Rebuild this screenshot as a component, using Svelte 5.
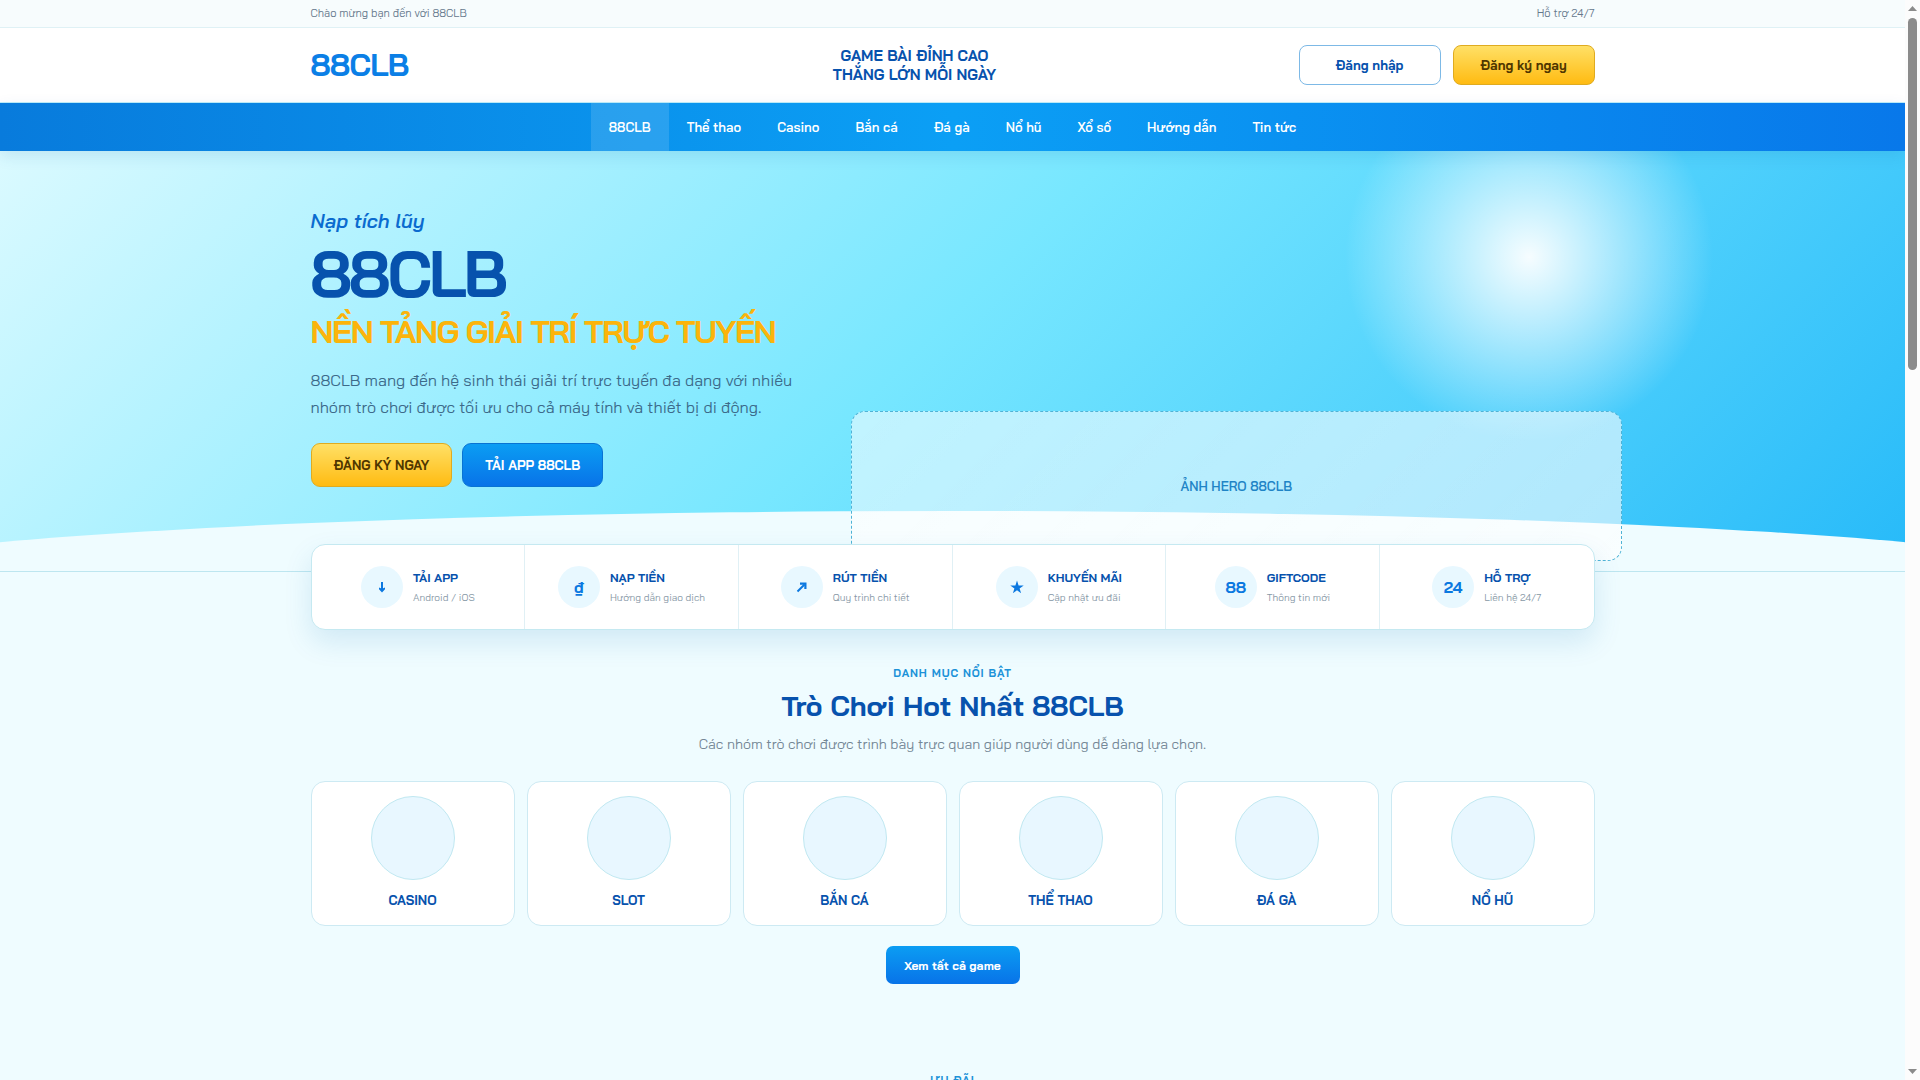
<script>
  const navItems = ['88CLB', 'Thể thao', 'Casino', 'Bắn cá', 'Đá gà', 'Nổ hũ', 'Xổ số', 'Hướng dẫn', 'Tin tức'];

  const quickLinks = [
    { icon: 'down', title: 'TẢI APP', text: 'Android / iOS' },
    { icon: '₫', title: 'NẠP TIỀN', text: 'Hướng dẫn giao dịch' },
    { icon: 'up', title: 'RÚT TIỀN', text: 'Quy trình chi tiết' },
    { icon: 'star', title: 'KHUYẾN MÃI', text: 'Cập nhật ưu đãi' },
    { icon: '88', title: 'GIFTCODE', text: 'Thông tin mới' },
    { icon: '24', title: 'HỖ TRỢ', text: 'Liên hệ 24/7' }
  ];

  const games = ['CASINO', 'SLOT', 'BẮN CÁ', 'THỂ THAO', 'ĐÁ GÀ', 'NỔ HŨ'];

  let active = '88CLB';
</script>

<div class="window">
  <div class="page">
    <div class="topbar">
      <div class="container topbar-inner">
        <span>Chào mừng bạn đến với 88CLB</span>
        <span>Hỗ trợ 24/7</span>
      </div>
    </div>

    <header class="header">
      <div class="container header-inner">
        <a class="logo" href="#home">88CLB</a>
        <p class="slogan">GAME BÀI ĐỈNH CAO<br />THẮNG LỚN MỖI NGÀY</p>
        <div class="actions">
          <a class="btn btn-outline" href="#login">Đăng nhập</a>
          <a class="btn btn-gold" href="#register">Đăng ký ngay</a>
        </div>
      </div>
    </header>

    <nav class="nav">
      {#each navItems as item}
        <a href="#{item}" class:active={active === item} on:click={() => (active = item)}>{item}</a>
      {/each}
    </nav>

    <main>
      <section class="hero">
        <div class="hero-bg">
          <div class="glow"></div>
          <div class="curve"></div>
        </div>
        <div class="container hero-inner">
          <div class="hero-copy">
            <p class="kicker">Nạp tích lũy</p>
            <h1>88CLB</h1>
            <p class="headline">NỀN TẢNG GIẢI TRÍ TRỰC TUYẾN</p>
            <p class="lead">
              88CLB mang đến hệ sinh thái giải trí trực tuyến đa dạng với nhiều
              nhóm trò chơi được tối ưu cho cả máy tính và thiết bị di động.
            </p>
            <div class="hero-actions">
              <a class="btn btn-lg btn-gold" href="#register">ĐĂNG KÝ NGAY</a>
              <a class="btn btn-lg btn-blue" href="#app">TẢI APP 88CLB</a>
            </div>
          </div>
          <div class="hero-image">ẢNH HERO 88CLB</div>
        </div>
      </section>

      <div class="container quick">
        {#each quickLinks as link}
          <a class="quick-item" href="#{link.title}">
            <span class="quick-icon">
              {#if link.icon === 'down'}
                <svg viewBox="0 0 16 16" width="16" height="16"><path d="M8 3v8" stroke="currentColor" stroke-width="2" /><path d="M5 8.5l3 1.2 3-1.2v1.8L8 13.5l-3-3.2z" fill="currentColor" /></svg>
              {:else if link.icon === 'up'}
                <svg viewBox="0 0 16 16" width="16" height="16"><path d="M3.5 12.5l7-7" stroke="currentColor" stroke-width="2" /><path d="M6 3.5h6.5V10h-2.2V5.7H6z" fill="currentColor" /></svg>
              {:else if link.icon === 'star'}
                <svg viewBox="0 0 16 16" width="16" height="16"><path d="M8 1.5l1.6 4.9h5.1l-4.1 3 1.5 4.9L8 11.3l-4.1 3 1.5-4.9-4.1-3h5.1z" fill="currentColor" /></svg>
              {:else}
                {link.icon}
              {/if}
            </span>
            <span class="quick-text">
              <strong>{link.title}</strong>
              <small>{link.text}</small>
            </span>
          </a>
        {/each}
      </div>

      <section class="container section">
        <p class="eyebrow">DANH MỤC NỔI BẬT</p>
        <h2>Trò Chơi Hot Nhất 88CLB</h2>
        <p class="section-text">Các nhóm trò chơi được trình bày trực quan giúp người dùng dễ dàng lựa chọn.</p>
        <div class="games">
          {#each games as game}
            <a class="game" href="#{game}">
              <span class="game-image"></span>
              <strong>{game}</strong>
            </a>
          {/each}
        </div>
        <a class="btn btn-more btn-blue" href="#games">Xem tất cả game</a>
      </section>

      <section class="container section">
        <p class="eyebrow">ƯU ĐÃI</p>
      </section>
    </main>
  </div>

  <div class="scrollbar" aria-hidden="true">
    <svg viewBox="0 0 15 18" width="15" height="18"><path d="M7.5 6l4.5 5H3z" fill="#8b8b8b" /></svg>
    <div class="track"><div class="thumb"></div></div>
    <svg viewBox="0 0 15 18" width="15" height="18"><path d="M7.5 12L3 7h9z" fill="#8b8b8b" /></svg>
  </div>
</div>

<style>
  :global(body) {
    margin: 0;
    font-family: 'Bai Jamjuree', Inter, 'Noto Sans', sans-serif;
    color: #0752ad;
    background: #effcff;
  }

  .window {
    display: grid;
    grid-template-columns: minmax(0, 1fr) 15px;
    height: 100vh;
    overflow: hidden;
  }

  .page {
    min-height: 0;
    overflow: hidden;
    background: #effcff;
  }

  .container {
    width: min(1284px, calc(100% - 32px));
    margin: 0 auto;
    box-sizing: border-box;
  }

  a {
    color: inherit;
    text-decoration: none;
  }

  p,
  h1,
  h2 {
    margin: 0;
  }

  /* Top bar */
  .topbar {
    background: #f7fcfd;
    border-bottom: 1px solid #dff1f5;
    color: #65788c;
    font-size: 11px;
    line-height: 27px;
  }

  .topbar-inner {
    display: flex;
    justify-content: space-between;
  }

  /* Header */
  .header {
    background: #fff;
    border-bottom: 1px solid #bfeefa;
  }

  .header-inner {
    display: grid;
    grid-template-columns: 220px 1fr auto;
    gap: 24px;
    align-items: center;
    height: 74px;
  }

  .logo {
    font-size: 31px;
    font-weight: 700;
    letter-spacing: -0.02em;
    line-height: 38px;
    color: #0b7fe6;
  }

  .slogan {
    text-align: center;
    font-size: 15px;
    font-weight: 700;
    line-height: 19px;
  }

  .actions {
    display: flex;
    gap: 12px;
  }

  .btn {
    display: inline-flex;
    align-items: center;
    justify-content: center;
    box-sizing: border-box;
    width: 142px;
    height: 40px;
    border: 1px solid transparent;
    border-radius: 8px;
    font-size: 13px;
    font-weight: 700;
    white-space: nowrap;
  }

  .btn-outline {
    background: #fff;
    border-color: #7db9e6;
  }

  .btn-gold {
    background: linear-gradient(#ffe066, #ffbb12);
    border-color: #dfab20;
    color: #4f3600;
  }

  .btn-blue {
    background: linear-gradient(#0b9df3, #0873e8);
    border-color: #0873d4;
    color: #fff;
  }

  .btn-lg {
    width: auto;
    height: 44px;
    padding: 0 22px;
    border-radius: 9px;
  }

  .btn-more {
    width: 134px;
    height: 38px;
    border: 0;
    border-radius: 7px;
    font-size: 12px;
    margin-top: 20px;
  }

  /* Navigation */
  .nav {
    position: relative;
    z-index: 2;
    display: flex;
    justify-content: center;
    background: linear-gradient(90deg, #087bdc, #0b9ff5 50%, #0878ea);
    box-shadow: 0 5px 16px rgba(0, 90, 160, 0.12);
    color: #fff;
    font-size: 13px;
    font-weight: 600;
    line-height: 48px;
  }

  .nav a {
    padding: 0 18px;
  }

  .nav a.active {
    background: rgba(255, 255, 255, 0.13);
  }

  /* Hero */
  .hero {
    position: relative;
    height: 420px;
    background: linear-gradient(135deg, #dbfaff 0%, #77e7ff 48%, #27baf9 100%);
    border-bottom: 1px solid #bde6f0;
  }

  .hero-bg {
    position: absolute;
    inset: 0;
    overflow: hidden;
  }

  .glow {
    position: absolute;
    top: -80px;
    right: 10%;
    width: 372px;
    height: 372px;
    border-radius: 50%;
    background: radial-gradient(circle, rgba(255, 255, 255, 0.95), rgba(255, 255, 255, 0) 70%);
  }

  .curve {
    position: absolute;
    left: -10%;
    right: -10%;
    bottom: -80px;
    height: 140px;
    border-radius: 50% 50% 0 0;
    background: #effcff;
  }

  .hero-inner {
    position: relative;
    height: 100%;
  }

  .hero-copy {
    width: 500px;
    padding-top: 56px;
  }

  .kicker {
    font-size: 20px;
    font-style: italic;
    font-weight: 600;
    line-height: 28px;
    color: #0b6bcf;
  }

  h1 {
    font-size: 64px;
    font-weight: 700;
    letter-spacing: -0.045em;
    line-height: 64px;
    margin-top: 6px;
  }

  .headline {
    font-size: 32px;
    font-weight: 700;
    letter-spacing: -0.045em;
    line-height: 36px;
    margin-top: 8px;
    color: #fbb40b;
    white-space: nowrap;
  }

  .lead {
    margin-top: 18px;
    font-size: 16px;
    line-height: 27px;
    color: #3c6a8a;
  }

  .hero-actions {
    display: flex;
    gap: 10px;
    margin-top: 22px;
  }

  .hero-image {
    position: absolute;
    right: -27px;
    bottom: 10px;
    display: flex;
    align-items: center;
    justify-content: center;
    box-sizing: border-box;
    width: 60%;
    height: 150px;
    border: 1px dashed #4fb3d6;
    border-radius: 14px;
    background: linear-gradient(135deg, rgba(255, 255, 255, 0.55), rgba(255, 255, 255, 0.6));
    color: #1f84c6;
    font-size: 13px;
    font-weight: 600;
  }

  /* Quick links */
  .quick {
    position: relative;
    display: grid;
    grid-template-columns: repeat(6, 1fr);
    margin-top: -28px;
    overflow: hidden;
    border: 1px solid #c5e9f1;
    border-radius: 14px;
    background: #fff;
    box-shadow: 0 12px 28px rgba(0, 110, 180, 0.13);
  }

  .quick-item {
    display: flex;
    align-items: center;
    justify-content: center;
    gap: 10px;
    height: 84px;
    border-right: 1px solid #e0f0f5;
  }

  .quick-item:last-child {
    border-right: 0;
  }

  .quick-icon {
    display: flex;
    align-items: center;
    justify-content: center;
    width: 42px;
    height: 42px;
    border-radius: 50%;
    background: #e8f8ff;
    color: #0b78e0;
    font-size: 16px;
    font-weight: 700;
  }

  .quick-text {
    display: grid;
    gap: 4px;
    padding-top: 2px;
  }

  .quick-text strong {
    font-size: 12px;
    line-height: 16px;
  }

  .quick-text small {
    font-size: 10px;
    line-height: 16px;
    color: #8798a6;
  }

  /* Sections */
  .section {
    padding: 34px 0 53px;
    text-align: center;
  }

  .eyebrow {
    font-size: 11px;
    font-weight: 700;
    letter-spacing: 0.08em;
    line-height: 18px;
    color: #1c92d8;
  }

  h2 {
    margin-top: 4px;
    font-size: 28px;
    font-weight: 700;
    line-height: 40px;
  }

  .section-text {
    margin-top: 8px;
    font-size: 14px;
    line-height: 20px;
    color: #748796;
  }

  .games {
    display: grid;
    grid-template-columns: repeat(6, 1fr);
    gap: 12px;
    margin-top: 27px;
  }

  .game {
    display: flex;
    flex-direction: column;
    align-items: center;
    gap: 10px;
    padding: 14px 12px 15px;
    border: 1px solid #cdeaf3;
    border-radius: 14px;
    background: #fff;
  }

  .game-image {
    box-sizing: border-box;
    width: 84px;
    height: 84px;
    border: 1px solid #c0e8f1;
    border-radius: 50%;
    background: #e8f7ff;
  }

  .game strong {
    font-size: 13px;
    line-height: 20px;
  }

  /* Scrollbar */
  .scrollbar {
    display: flex;
    flex-direction: column;
    background: #fcfcfc;
  }

  .track {
    flex: 1;
  }

  .thumb {
    width: 9px;
    height: 33.7%;
    margin: 0 auto;
    border-radius: 5px;
    background: #8b8b8b;
  }
</style>
